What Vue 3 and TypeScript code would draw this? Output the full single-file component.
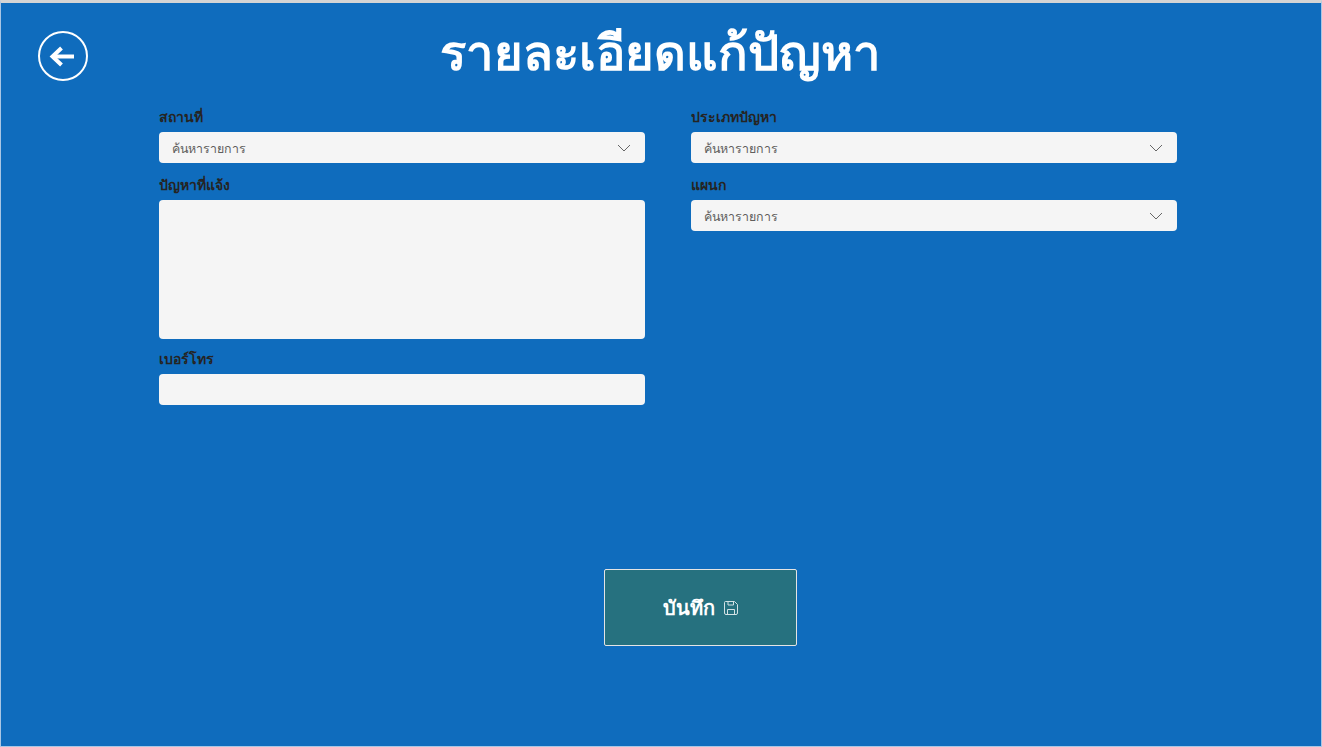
<script setup lang="ts">
// หน้ารายละเอียดแก้ปัญหา
const leftSelect = { label: 'สถานที่', placeholder: 'ค้นหารายการ' }
const rightSelects = [
  { label: 'ประเภทปัญหา', placeholder: 'ค้นหารายการ' },
  { label: 'แผนก', placeholder: 'ค้นหารายการ' },
]
</script>

<template>
  <div class="page">
    <header class="top">
      <button class="back" aria-label="back">
        <svg width="52" height="52" viewBox="0 0 52 52">
          <circle cx="26" cy="26" r="24" fill="none" stroke="#fff" stroke-width="2" />
          <path d="M18 26.5 H37" fill="none" stroke="#fff" stroke-width="4" />
          <path d="M24.5 18 L15.5 26.5 L24.5 35" fill="none" stroke="#fff" stroke-width="4" />
        </svg>
      </button>
      <h1 class="title">รายละเอียดแก้ปัญหา</h1>
    </header>

    <main class="form">
      <div class="col">
        <div class="field">
          <label>{{ leftSelect.label }}</label>
          <div class="box select">
            <span>{{ leftSelect.placeholder }}</span>
            <svg class="chev" width="14" height="8" viewBox="0 0 14 8">
              <path d="M1 1 L7 7 L13 1" fill="none" stroke="#666" stroke-width="1" />
            </svg>
          </div>
        </div>
        <div class="field tall">
          <label>ปัญหาที่แจ้ง</label>
          <div class="box area"></div>
        </div>
        <div class="field">
          <label>เบอร์โทร</label>
          <div class="box"></div>
        </div>
      </div>
      <div class="col">
        <div v-for="s in rightSelects" :key="s.label" class="field">
          <label>{{ s.label }}</label>
          <div class="box select">
            <span>{{ s.placeholder }}</span>
            <svg class="chev" width="14" height="8" viewBox="0 0 14 8">
              <path d="M1 1 L7 7 L13 1" fill="none" stroke="#666" stroke-width="1" />
            </svg>
          </div>
        </div>
      </div>
    </main>

    <div class="actions">
      <button class="save">
        <span>บันทึก</span>
        <svg class="disk" width="16" height="16" viewBox="0 0 16 16" fill="none" stroke="#fff" stroke-width="1">
          <path d="M2.5 1.5 H11.5 L14.5 4.5 V13 A1.5 1.5 0 0 1 13 14.5 H3 A1.5 1.5 0 0 1 1.5 13 V2.5 A1 1 0 0 1 2.5 1.5 Z" />
          <path d="M5 1.5 V5 H10.5 V1.5" />
          <path d="M4.5 14.5 V9.5 H11.5 V14.5" />
        </svg>
      </button>
    </div>
  </div>
</template>

<style>
html, body { margin: 0; background: #0f6cbd; }
</style>

<style scoped>
.page {
  box-sizing: border-box;
  width: 1322px;
  height: 747px;
  background: #0f6cbd;
  border: 1px solid #a9c6e4;
  border-top: 3px solid #d4d4d4;
  font-family: "Noto Sans", "Open Sans", sans-serif;
  overflow: hidden;
}
.top {
  display: flex;
  align-items: flex-start;
  height: 97px;
  position: relative;
}
.back {
  position: absolute;
  left: 36px;
  top: 27px;
  padding: 0;
  width: 52px;
  height: 52px;
  border: 0;
  background: none;
}
.title {
  margin: 0;
  width: 100%;
  text-align: center;
  color: #fff;
  font-size: 49px;
  font-weight: 700;
  line-height: 96px;
  padding-right: 2px;
  box-sizing: border-box;
}
.form {
  display: flex;
  gap: 46px;
  padding: 0 0 0 158px;
}
.col {
  width: 486px;
  display: flex;
  flex-direction: column;
}
.field label {
  display: block;
  height: 32px;
  line-height: 34px;
  font-size: 14px;
  font-weight: 600;
  color: #252423;
}
.field { margin-bottom: 5px; }
.field.tall { margin-bottom: 3px; }
.box {
  box-sizing: border-box;
  height: 31px;
  background: #f5f5f5;
  border-radius: 4px;
}
.area { height: 139px; }
.select {
  display: flex;
  align-items: center;
  justify-content: space-between;
  padding: 1px 14px 0 13px;
  font-size: 12.4px;
  color: #605e5c;
}
.actions {
  display: flex;
  padding: 159px 0 0 603px;
}
.save {
  box-sizing: border-box;
  width: 193px;
  height: 77px;
  background: #26717f;
  border: 1px solid #e4e4e4;
  border-radius: 2px;
  color: #fff;
  font-family: inherit;
  font-size: 20px;
  font-weight: 700;
  display: flex;
  align-items: center;
  justify-content: center;
  gap: 8px;
}
.disk { opacity: 0.8; }
</style>
